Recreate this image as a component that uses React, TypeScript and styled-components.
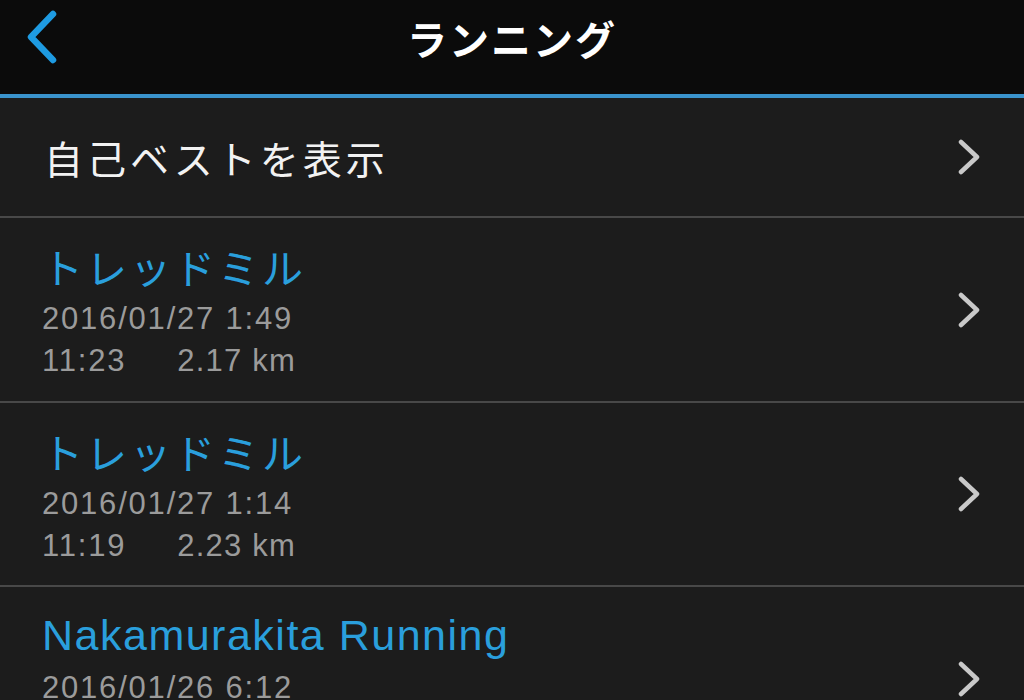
import styled, { createGlobalStyle } from 'styled-components';

const GlobalStyle = createGlobalStyle`
  html, body {
    margin: 0;
    padding: 0;
    background: #1c1c1c;
    overflow: hidden;
  }
  body {
    font-family: "Liberation Sans", "Noto Sans CJK JP", sans-serif;
  }
`;

const Screen = styled.div`
  width: 1024px;
  height: 700px;
  background: #1c1c1c;
  overflow: hidden;
  display: flex;
  flex-direction: column;
`;

const NavBar = styled.header`
  height: 94px;
  background: #0b0b0b;
  border-bottom: 4px solid #3a93cc;
  display: grid;
  grid-template-columns: 120px 1fr 120px;
  align-items: center;
`;

const BackButton = styled.button`
  border: 0;
  background: none;
  padding: 10px 0 0 22px;
  height: 94px;
  display: flex;
  align-items: flex-start;
  cursor: pointer;
`;

const Title = styled.h1`
  margin: 0 0 18px;
  text-align: center;
  color: #ffffff;
  font-family: "Noto Sans CJK JP", sans-serif;
  font-weight: 700;
  font-size: 40px;
  letter-spacing: 2px;
`;

const List = styled.ul`
  list-style: none;
  margin: 0;
  padding: 0;
`;

const Row = styled.li<{ $inset?: boolean; $height: number }>`
  height: ${(p) => p.$height}px;
  display: flex;
  align-items: center;
  padding-left: ${(p) => (p.$inset ? 41 : 0)}px;
  & + & {
    border-top: 2px solid #484848;
  }
`;

const RowBody = styled.div<{ $pad: number }>`
  flex: 1;
  align-self: stretch;
  padding-left: ${(p) => p.$pad}px;
  display: flex;
  flex-direction: column;
  justify-content: center;
`;

const RunBody = styled(RowBody)`
  justify-content: flex-start;
  padding-top: 16px;
`;

const Plain = styled.span`
  color: #f2f2f2;
  font-family: "Noto Sans CJK JP", sans-serif;
  font-size: 39px;
  letter-spacing: 4px;
  line-height: 56px;
`;

const Activity = styled.span<{ $latin?: boolean }>`
  color: #2a9fdc;
  font-family: ${(p) => (p.$latin ? '"Liberation Sans"' : '"Noto Sans CJK JP"')}, sans-serif;
  font-size: ${(p) => (p.$latin ? 43 : 41)}px;
  letter-spacing: ${(p) => (p.$latin ? 1.5 : 3)}px;
  line-height: 64px;
`;

const Meta = styled.div`
  color: #9b9b9b;
  font-family: "Liberation Sans", sans-serif;
  font-size: 31px;
  letter-spacing: 1.8px;
  line-height: 42px;
  display: flex;
`;

const Distance = styled.span`
  margin-left: 51px;
  letter-spacing: 1.2px;
`;

const Chevron = styled.svg`
  flex: none;
  width: 24px;
  height: 36px;
  margin-right: 43px;
`;

type Run = {
  name: string;
  latin?: boolean;
  date: string;
  time?: string;
  distance?: string;
  height: number;
};

const runs: Run[] = [
  { name: 'トレッドミル', date: '2016/01/27 1:49', time: '11:23', distance: '2.17 km', height: 183 },
  { name: 'トレッドミル', date: '2016/01/27 1:14', time: '11:19', distance: '2.23 km', height: 182 },
  { name: 'Nakamurakita Running', latin: true, date: '2016/01/26 6:12', height: 184 },
];

function RowChevron() {
  return (
    <Chevron viewBox="0 0 24 36">
      <path d="M4 3 L20 18 L4 33" fill="none" stroke="#c9c9c9" strokeWidth="4.5" strokeLinecap="round" strokeLinejoin="round" />
    </Chevron>
  );
}

export default function App() {
  return (
    <>
      <GlobalStyle />
      <Screen>
        <NavBar>
          <BackButton aria-label="戻る">
            <svg width="40" height="54" viewBox="0 0 40 54">
              <path d="M31 4 L9 27 L31 50" fill="none" stroke="#1e9be2" strokeWidth="6.5" strokeLinecap="round" strokeLinejoin="round" />
            </svg>
          </BackButton>
          <Title>ランニング</Title>
          <div />
        </NavBar>
        <List>
          <Row $height={118}>
            <RowBody $pad={44}>
              <Plain>自己ベストを表示</Plain>
            </RowBody>
            <RowChevron />
          </Row>
          {runs.map((run, i) => (
            <Row key={i} $inset={i > 0} $height={run.height}>
              <RunBody $pad={i > 0 ? 1 : 42}>
                <Activity $latin={run.latin}>{run.name}</Activity>
                <Meta>{run.date}</Meta>
                {run.time && (
                  <Meta>
                    <span>{run.time}</span>
                    <Distance>{run.distance}</Distance>
                  </Meta>
                )}
              </RunBody>
              <RowChevron />
            </Row>
          ))}
        </List>
      </Screen>
    </>
  );
}
